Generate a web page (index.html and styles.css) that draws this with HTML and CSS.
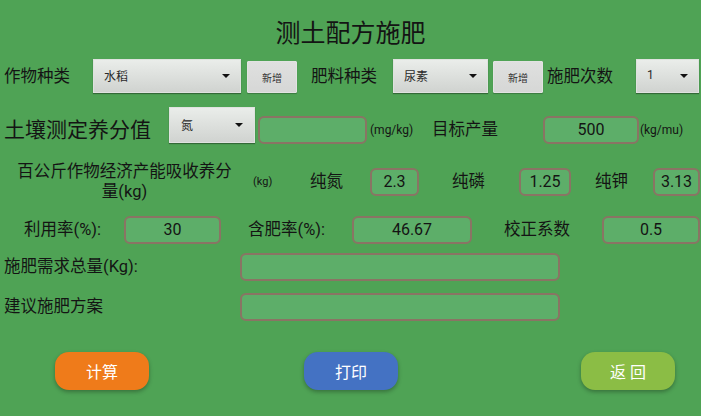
FILE: index.html
```html
<!DOCTYPE html>
<html lang="zh">
<head>
<meta charset="utf-8">
<title>测土配方施肥</title>
<link rel="stylesheet" href="styles.css">
</head>
<body>
<div class="page">
  <h1 class="title">测土配方施肥</h1>

  <div class="row row1">
    <span class="lbl w-l1">作物种类</span>
    <div class="spinner w-s1"><span>水稻</span><i class="arrow"></i></div>
    <button class="btn-add b1">新增</button>
    <span class="lbl w-l2">肥料种类</span>
    <div class="spinner w-s2"><span>尿素</span><i class="arrow"></i></div>
    <button class="btn-add b2">新增</button>
    <span class="lbl w-l3">施肥次数</span>
    <div class="spinner w-s3"><span>1</span><i class="arrow"></i></div>
  </div>

  <div class="row row2">
    <span class="lbl big w-r2l1">土壤测定养分值</span>
    <div class="spinner tall w-r2s"><span>氮</span><i class="arrow"></i></div>
    <div class="field w-r2i1"></div>
    <span class="unit w-r2u">(mg/kg)</span>
    <span class="lbl w-r2l2">目标产量</span>
    <div class="field w-r2i2">500</div>
    <span class="unit u2">(kg/mu)</span>
  </div>

  <div class="row row3">
    <span class="lbl multi">百公斤作物经济产能吸收养分<br>量(kg)</span>
    <span class="unit small w-r3u">(kg)</span>
    <span class="lbl w-r3l1">纯氮</span>
    <div class="field w-r3i1">2.3</div>
    <span class="lbl w-r3l2">纯磷</span>
    <div class="field w-r3i2">1.25</div>
    <span class="lbl w-r3l3">纯钾</span>
    <div class="field w-r3i3">3.13</div>
  </div>

  <div class="row row4">
    <span class="lbl w-r4l1">利用率(%):</span>
    <div class="field w-r4i1">30</div>
    <span class="lbl w-r4l2">含肥率(%):</span>
    <div class="field w-r4i2">46.67</div>
    <span class="lbl w-r4l3">校正系数</span>
    <div class="field w-r4i3">0.5</div>
  </div>

  <div class="row row5">
    <span class="lbl w-r5l">施肥需求总量(Kg):</span>
    <div class="field w-wide"></div>
  </div>

  <div class="row row6">
    <span class="lbl w-r5l">建议施肥方案</span>
    <div class="field w-wide"></div>
  </div>

  <div class="row actions">
    <button class="act orange">计算</button>
    <button class="act blue">打印</button>
    <button class="act lime">返 回</button>
  </div>
</div>
</body>
</html>
```

FILE: styles.css
```css
* { box-sizing: border-box; }

html, body {
  margin: 0;
  padding: 0;
}

body {
  width: 701px;
  height: 416px;
  overflow: hidden;
  background: #4fa355;
  font-family: Roboto, "Noto Sans CJK SC", sans-serif;
  color: #141414;
}

.page {
  display: flex;
  flex-direction: column;
}

.title {
  margin: 0;
  padding-top: 19px;
  height: 49px;
  font-size: 25px;
  line-height: 30px;
  font-weight: normal;
  text-align: center;
}

.row {
  display: flex;
  align-items: center;
}

.lbl {
  font-size: 16.5px;
  line-height: 20px;
  white-space: nowrap;
  flex: none;
}

.lbl.big { font-size: 21px; line-height: 26px; }

.unit {
  font-size: 12px;
  line-height: 16px;
  flex: none;
  white-space: nowrap;
}

.unit.small { font-size: 11px; }

/* spinners */
.spinner {
  flex: none;
  position: relative;
  height: 34px;
  display: flex;
  align-items: center;
  padding-left: 10px;
  font-size: 12px;
  color: #2a2a2a;
  background: linear-gradient(#eaedea, #d0d3d0);
  border: 1px solid #dfe2df;
  box-shadow: 0 1px 1px rgba(0, 0, 0, 0.35);
}

.spinner.tall { height: 36px; padding-left: 11px; }

.spinner span { margin-top: -2px; }

.arrow {
  position: absolute;
  right: 10px;
  top: 50%;
  margin-top: -2px;
  width: 0;
  height: 0;
  border-left: 4px solid transparent;
  border-right: 4px solid transparent;
  border-top: 4px solid #111;
}

.spinner.tall .arrow { right: 11px; }

.btn-add {
  flex: none;
  height: 32px;
  margin-top: 2px;
  padding: 0;
  font-family: Roboto, "Noto Sans CJK SC", sans-serif;
  font-size: 10px;
  color: #333;
  background: linear-gradient(#dfe0df, #d6d7d6);
  border: 1px solid #e2e3e2;
  border-radius: 1px;
  box-shadow: 0 1px 1px rgba(0, 0, 0, 0.25);
}

/* inputs */
.field {
  flex: none;
  height: 28px;
  border: 2px solid #8a7464;
  border-radius: 6px;
  background: #5dae69;
  font-size: 16px;
  line-height: 24px;
  text-align: center;
  color: #141414;
}

/* row 1 */
.row1 { margin-top: 10px; height: 35px; padding-left: 4px; align-items: flex-start; }
.row1 .lbl { align-self: center; }
.w-l1 { width: 89px; }
.w-s1 { width: 148px; }
.b1 { width: 50px; margin-left: 6px; }
.w-l2 { width: 82px; margin-left: 14px; }
.w-s2 { width: 95px; }
.b2 { width: 50px; margin-left: 5px; }
.w-l3 { width: 89px; margin-left: 4px; }
.w-s3 { width: 63px; }

/* row 2 */
.row2 { margin-top: 13px; height: 37px; padding-left: 4px; align-items: flex-start; }
.row2 .lbl, .row2 .unit { align-self: center; }
.row2 .lbl.big { margin-top: 8px; }
.w-r2l1 { width: 165px; }
.w-r2s { width: 86px; }
.w-r2i1 { width: 109px; margin-left: 3px; margin-top: 9px; }
.w-r2u { width: 62px; margin-left: 3px; margin-top: 9px; }
.w-r2l2 { width: 111px; margin-top: 9px; }
.w-r2i2 { width: 96px; margin-top: 9px; }
.u2 { margin-left: 1px; margin-top: 9px; }

/* row 3 */
.row3 { margin-top: 18px; height: 40px; padding-left: 9px; }
.multi { width: 231px; text-align: center; white-space: normal; }
.w-r3u { width: 57px; margin-left: 13px; }
.w-r3l1 { width: 60px; }
.w-r3i1 { width: 49px; }
.w-r3l2 { width: 67px; margin-left: 33px; }
.w-r3i2 { width: 52px; }
.w-r3l3 { width: 58px; margin-left: 24px; }
.w-r3i3 { width: 47px; }

/* row 4 */
.row4 { margin-top: 14px; height: 28px; padding-left: 24px; }
.w-r4l1 { width: 100px; }
.w-r4i1 { width: 97px; }
.w-r4l2 { width: 104px; margin-left: 27px; }
.w-r4i2 { width: 120px; }
.w-r4l3 { width: 98px; margin-left: 32px; }
.w-r4i3 { width: 98px; }

/* rows 5-6 */
.row5 { margin-top: 9px; height: 28px; padding-left: 4px; }
.row6 { margin-top: 12px; height: 28px; padding-left: 4px; }
.w-r5l { width: 236px; }
.w-wide { width: 320px; }

/* bottom actions */
.actions { margin-top: 31px; height: 38px; padding-left: 55px; }

.act {
  flex: none;
  width: 94px;
  height: 38px;
  padding: 0;
  border: none;
  border-radius: 14px;
  color: #fff;
  font-family: Roboto, "Noto Sans CJK SC", sans-serif;
  font-size: 16px;
  box-shadow: 0 2px 4px rgba(0, 0, 0, 0.3);
}

.orange { background: #ef7b1a; }
.blue { background: #4472c3; margin-left: 155px; }
.lime { background: #8bbd45; margin-left: 183px; }
```
